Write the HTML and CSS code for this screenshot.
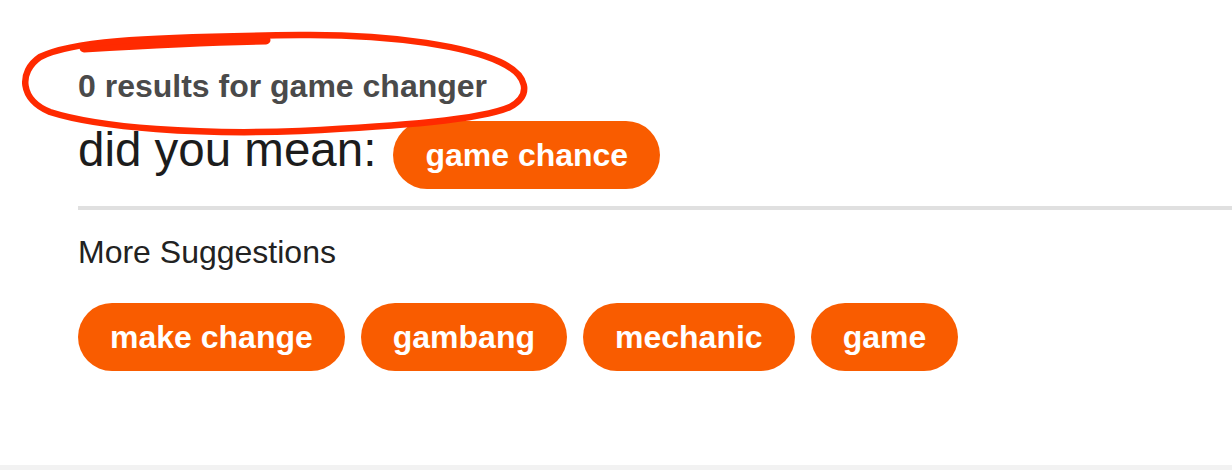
FILE: index.html
```html
<!DOCTYPE html>
<html lang="en">
<head>
<meta charset="utf-8">
<title>Search results</title>
<link rel="stylesheet" href="styles.css">
</head>
<body>
<main class="results">
  <h1 class="results-count">0 results for game changer</h1>
  <div class="did-you-mean">
    <span class="dym-label">did you mean:</span>
    <a class="pill" href="#">game chance</a>
  </div>
  <hr class="divider">
  <h2 class="more-title">More Suggestions</h2>
  <div class="pill-row">
    <a class="pill" href="#">make change</a>
    <a class="pill" href="#">gambang</a>
    <a class="pill" href="#">mechanic</a>
    <a class="pill" href="#">game</a>
  </div>
</main>
<footer class="footer"></footer>
<svg class="annotation" width="1232" height="470" viewBox="0 0 1232 470" aria-hidden="true">
  <path class="mark-thick" d="M 84 48 C 150 44, 210 41, 266 40"/>
  <path class="mark" d="M 40 57 C 70 42, 130 37, 300 35 C 400 34, 470 48, 500 62 C 528 75, 532 95, 510 107 C 480 120, 400 126, 300 131 C 200 135, 100 128, 50 112 C 20 100, 18 72, 40 57"/>
</svg>
</body>
</html>
```
FILE: styles.css
```css
html, body {
  margin: 0;
  padding: 0;
  background: #fff;
}
body {
  font-family: "Liberation Sans", Arial, Helvetica, sans-serif;
  position: relative;
  overflow: hidden;
  height: 470px;
}
.results {
  padding: 66px 0 94px 78px;
}
.results-count {
  margin: 0 0 15px 0;
  font-size: 32px;
  line-height: 40px;
  font-weight: 700;
  color: #4a4a4a;
}
.did-you-mean {
  display: flex;
  align-items: baseline;
  gap: 17px;
}
.dym-label {
  font-size: 47.5px;
  line-height: 52px;
  color: #1c1c1c;
}
.pill {
  display: inline-block;
  background: #f95c00;
  color: #fff;
  font-size: 32px;
  line-height: 36px;
  font-weight: 700;
  padding: 16px 32px;
  border-radius: 34px;
  text-decoration: none;
  white-space: nowrap;
}
.divider {
  margin: 17px 0 0 0;
  border: 0;
  height: 4px;
  background: #e0e0e0;
}
.more-title {
  margin: 24px 0 0 0;
  font-size: 32px;
  line-height: 36px;
  font-weight: 400;
  color: #222;
}
.pill-row {
  display: flex;
  gap: 16px;
  margin-top: 33px;
}
.footer {
  height: 5px;
  background: #f2f2f2;
}
.annotation {
  position: absolute;
  left: 0;
  top: 0;
  pointer-events: none;
}
.mark, .mark-thick {
  fill: none;
  stroke: #ff2a00;
  stroke-linecap: round;
  stroke-linejoin: round;
}
.mark { stroke-width: 6.5; }
.mark-thick { stroke-width: 9; }
```
